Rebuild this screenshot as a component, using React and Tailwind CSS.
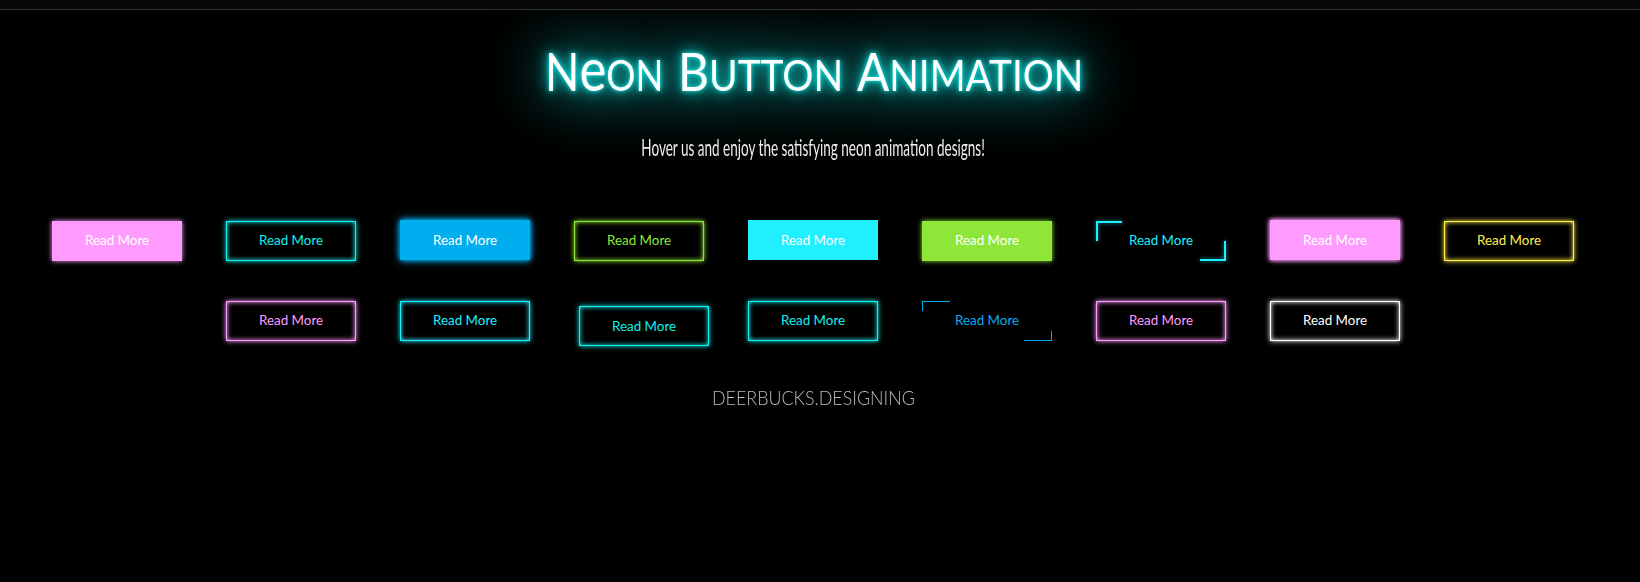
const ROW_ONE = [
  { label: 'text-white', box: 'bg-[#ff9bff] shadow-[0_0_5px_#ff9bff]' },
  { label: 'text-[#0ff0ed]', box: 'border border-[#0ff0ed] shadow-[0_0_5px_#0ff0ed,inset_0_0_5px_#0ff0ed]' },
  { label: 'text-white', box: 'bg-[#00adef] shadow-[0_0_5px_#00adef,0_0_8px_#00adef] -translate-y-px rounded-[1px]' },
  { label: 'text-[#8ee738]', box: 'border border-[#8ee738] shadow-[0_0_5px_#8ee738,inset_0_0_5px_#8ee738]' },
  { label: 'text-white', box: 'bg-[#1fefff] -translate-y-px' },
  { label: 'text-white', box: 'bg-[#8ee738] shadow-[0_0_5px_#8ee738]' },
  { label: 'text-[#1fefff]', corners: 'glow' },
  { label: 'text-white', box: 'bg-[#ff9bff] shadow-[0_0_5px_#ff9bff,0_0_5px_#ff9bff] -translate-y-px' },
  { label: 'text-[#fff04c]', box: 'border border-[#fff04c] shadow-[0_0_5px_#fff04c,inset_0_0_5px_#fff04c]' },
];

const ROW_TWO = [
  { label: 'text-[#ff9bff]', box: 'border border-[#ff9bff] shadow-[0_0_5px_#ff9bff,inset_0_0_5px_#ff9bff]' },
  { label: 'text-[#1fefff]', box: 'border border-[#1fefff] shadow-[0_0_5px_#1fefff,inset_0_0_5px_#1fefff]' },
  { label: 'text-[#0ff0ed] translate-y-px', box: 'border border-[#0ff0ed] shadow-[0_0_5px_#0ff0ed,inset_0_0_5px_#0ff0ed]', shift: 'translate-x-[5px] translate-y-[5px]' },
  { label: 'text-[#0ff0ed]', box: 'border border-[#0ff0ed] shadow-[0_0_5px_#0ff0ed,inset_0_0_5px_#0ff0ed]' },
  { label: 'text-[#00adef]', corners: 'thin' },
  { label: 'text-[#ff9bff]', box: 'border border-[#ff9bff] shadow-[0_0_5px_#ff9bff,inset_0_0_5px_#ff9bff]' },
  { label: 'text-white', box: 'border border-white shadow-[0_0_5px_#fff,inset_0_0_5px_#fff]' },
];

function Corners({ kind }) {
  if (kind === 'glow') {
    return (
      <>
        <span className="absolute top-0 left-0 h-5 w-[26px] border-t-2 border-l-2 border-[#1fefff] [filter:drop-shadow(0_0_2px_#1fefffaa)]" />
        <span className="absolute right-0 bottom-0 h-5 w-[26px] border-r-2 border-b-2 border-[#1fefff] [filter:drop-shadow(0_0_2px_#1fefffaa)]" />
      </>
    );
  }
  return (
    <>
      <span className="absolute top-0 left-0 h-[10px] w-7 border-t border-l border-[#00adef]" />
      <span className="absolute right-0 bottom-0 h-[10px] w-7 border-r border-b border-[#00adef]" />
    </>
  );
}

function NeonButton({ label, box, corners, shift = '' }) {
  return (
    <button className={`relative flex h-10 w-[130px] items-center justify-center pb-0.5 text-[13.4px] leading-[20px] ${shift}`}>
      {corners ? <Corners kind={corners} /> : <span className={`absolute inset-0 ${box}`} />}
      <span className={`relative ${label}`}>Read More</span>
    </button>
  );
}

function Word({ children, width, scale }) {
  return (
    <span className={`block shrink-0 ${width}`}>
      <span className={`block w-max origin-left whitespace-nowrap ${scale}`}>{children}</span>
    </span>
  );
}

export default function App() {
  return (
    <div className="flex h-[582px] w-full flex-col overflow-hidden bg-black font-['Lato',sans-serif]">
      <div className="relative z-10 h-[10px] shrink-0 border-b border-[#333] bg-[#060606]" />
      <main className="flex w-[1626px] flex-col items-center">
        <h1 className="mt-[32px] flex h-[66px] w-[536px] text-[43px] leading-[66px] text-white [filter:drop-shadow(0_0_2px_#0ff0ed)_drop-shadow(0_0_7px_#0ff0eddd)_drop-shadow(0_0_30px_#0ff0edcc)]">
          <Word width="w-[133px]" scale="scale-x-[0.85]">
            <span className="text-[53px] leading-[0]">N</span><span className="text-[60px] leading-[0]">e</span><span className="uppercase">on</span>
          </Word>
          <Word width="w-[179px]" scale="scale-x-[0.905]">
            <span className="text-[53px] leading-[0]">B</span><span className="uppercase">utton</span>
          </Word>
          <Word width="w-[224px]" scale="scale-x-[0.9]">
            <span className="text-[53px] leading-[0]">A</span><span className="uppercase">nimation</span>
          </Word>
        </h1>
        <p className="relative mt-[23px] h-8 scale-x-[0.588] text-[23px] leading-8 whitespace-nowrap text-[#eee]">
          Hover us and enjoy the satisfying neon animation designs!
        </p>
        <section className="mt-[58px] flex flex-col items-center gap-10">
          <div className="flex gap-11">
            {ROW_ONE.map((b, i) => <NeonButton key={i} {...b} />)}
          </div>
          <div className="flex gap-11">
            {ROW_TWO.map((b, i) => <NeonButton key={i} {...b} />)}
          </div>
        </section>
        <p className="mt-[41px] scale-x-[0.895] text-[20px] leading-[30px] font-light text-[#bbb]">DEERBUCKS.DESIGNING</p>
      </main>
    </div>
  );
}
